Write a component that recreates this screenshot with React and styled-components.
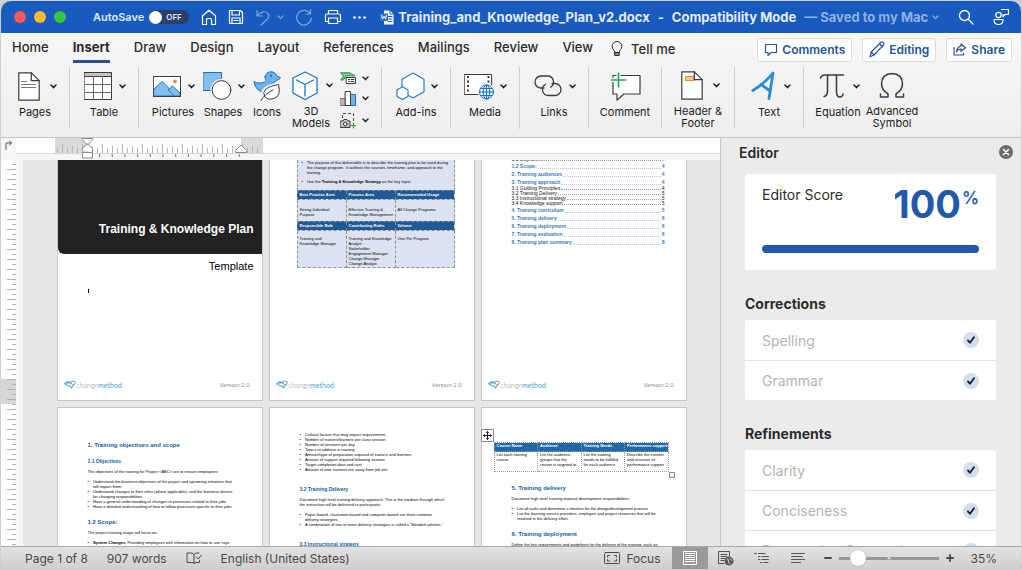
import { Fragment } from 'react'
import styled, { createGlobalStyle, css } from 'styled-components'

const tabs = [
  'Home',
  'Insert',
  'Draw',
  'Design',
  'Layout',
  'References',
  'Mailings',
  'Review',
  'View'
]

const toc = [
  { title: '1.1 Objectives', page: 4, sub: true },
  { title: '1.2 Scope:', page: 4 },
  { title: '2. Training audiences', page: 4 },
  { title: '3. Training approach', page: 4 },
  { title: '3.1 Guiding Principles', page: 4, sub: true },
  { title: '3.2 Training Delivery', page: 5, sub: true },
  { title: '3.3 Instructional strategy', page: 5, sub: true },
  { title: '3.4 Knowledge support', page: 5, sub: true },
  { title: '4. Training curriculum', page: 5 },
  { title: '5. Training delivery', page: 6 },
  { title: '6. Training deployment', page: 6 },
  { title: '7. Training evaluation', page: 6 },
  { title: '8. Training plan summary', page: 8 }
]

const checks = [
  { title: 'Corrections', items: ['Spelling', 'Grammar'] },
  {
    title: 'Refinements',
    items: ['Clarity', 'Conciseness', 'Punctuation Conventions']
  }
]

const range = (n) => Array.from({ length: n }, (_, i) => i)

/* ---------- icons ---------- */

const Svg = ({ w = 18, h = w, box, children, ...rest }) => (
  <svg
    width={w}
    height={h}
    viewBox={box || `0 0 ${w} ${h}`}
    fill="none"
    stroke="currentColor"
    strokeLinecap="round"
    strokeLinejoin="round"
    aria-hidden="true"
    {...rest}>
    {children}
  </svg>
)

const Chevron = ({ w = 7, stroke = 1.5 }) => (
  <Svg w={w} h={5} box="0 0 7 5" strokeWidth={stroke}>
    <path d="M1 1l2.500 2.600L6 1" />
  </Svg>
)

const HomeIcon = () => (
  <Svg w={16} h={17} strokeWidth="1.2">
    <path d="M1.5 6.8L8 1.2l6.500 5.600V15.500h-4V10.500q0-1-1-1h-3q-1 0-1 1v5h-4z" />
  </Svg>
)
const SaveIcon = () => (
  <Svg w={16} strokeWidth="1.2">
    <path d="M1.500 1.500h11l2 2v11h-13zM4 1.500v4.500h7.500V1.500M4 14.500V9h8v5.500M6 11.500h4" />
  </Svg>
)
const UndoIcon = () => (
  <Svg w={16} h={17} strokeWidth="1.200">
    <path d="M2 1.500v5.500h5.500M2 7c3-4 7.500-5.500 10.500-3 2.500 2.300 1.500 4.500-.5 6.500L6 16" />
  </Svg>
)
const RedoIcon = () => (
  <Svg w={18} strokeWidth="1.2">
    <path d="M15.500 1.500v4.500H11M15.300 6A7.300 7.300 0 1 0 16.300 10" />
  </Svg>
)
const PrintIcon = () => (
  <Svg w={18} h={16} strokeWidth="1.2">
    <path d="M4.500 5V1.500h9V5M4.500 12.500h-3v-6q0-1.500 1.500-1.500h12q1.500 0 1.500 1.500v6h-3M4.500 9h9v5.500h-9z" />
  </Svg>
)
const DotsIcon = () => (
  <Svg w={13} h={3} fill="currentColor" stroke="none">
    <circle cx="1.500" cy="1.500" r="1.300" />
    <circle cx="6.500" cy="1.500" r="1.300" />
    <circle cx="11.500" cy="1.500" r="1.300" />
  </Svg>
)
const DocIcon = () => (
  <Svg w={14} h={15} stroke="none">
    <path d="M4 .5h6l3.500 3.500v10.500H4z" fill="#fff" />
    <path d="M10 .5V4h3.500" stroke="#185abd" />
    <path d="M8.500 6.500h3.500M8.500 9h3.500M8.500 11.500h3.500" stroke="#185abd" />
    <rect x="0" y="3.500" width="8" height="7.500" fill="#2f6fd0" />
    <path d="M1.500 5.500l1 3.500L4 6l1.500 3 1-3.500" stroke="#fff" />
  </Svg>
)
const SearchIcon = () => (
  <Svg w={16} strokeWidth="1.300">
    <circle cx="6.500" cy="6.500" r="5" />
    <path d="M10.200 10.200l4.800 4.800" />
  </Svg>
)
const PeopleIcon = () => (
  <Svg w={18} strokeWidth="1.200">
    <circle cx="6.500" cy="7" r="2.700" />
    <path d="M2 11.500h9v1q-.3 4-4.500 4T2 12.500zM9.500 1.500h7v5h-3.500l-2 2v-2" />
  </Svg>
)
const BulbIcon = () => (
  <Svg w={12} h={16} strokeWidth="1">
    <path d="M3.800 11.200C3.800 9 1.200 8.500 1.200 5.300a4.800 4.800 0 0 1 9.600 0c0 3.200-2.600 3.700-2.600 5.900zM3.800 11.200v3.300h4.400v-3.300M4 13h4" />
  </Svg>
)
const CommentsIcon = () => (
  <Svg w={14} strokeWidth="1.200">
    <path d="M1.500 1.500h11v8H7l-3 3v-3H1.500z" />
  </Svg>
)
const PencilIcon = () => (
  <Svg w={16} h={17} strokeWidth="1.200">
    <path d="M1 15.800l1.200-4.800L12 1.300q1.200-.8 2.300.3t.3 2.300L5 14zM2.200 11L5 14M10.500 2.800l3 2.900" />
  </Svg>
)
const ShareIcon = () => (
  <Svg w={14} h={13} strokeWidth="1.200">
    <path d="M1 4.500v7.500h9.500v-2M8 1l4.500 3.700L8 8.300V6.200Q5 6 3.500 8.800 4 4 8 3.200z" />
  </Svg>
)

const PagesIcon = () => (
  <Svg w={22} h={29} stroke="#3b3b3b" strokeWidth="1.200">
    <path d="M.8.800h12.500l7.900 7.900v19.500H.8z" fill="#fff" />
    <path d="M13.300.8v7.900h7.900" />
    <path d="M3.500 9.500h5M3.500 12.500h14M3.500 15.500h14" stroke="#777" />
  </Svg>
)
const TableIcon = () => (
  <Svg w={28} h={28} stroke="#3b3b3b">
    <path d="M.5.5h27v27H.5z" fill="#fff" />
    <path d="M.5.5h27v4H.5z" fill="#c4c4c4" />
    <path d="M9.500 4.500v23M18.500 4.500v23M.5 12.500h27M.5 20.500h27" stroke="#666" />
  </Svg>
)
const PictureIcon = () => (
  <Svg w={28} h={22} stroke="#3b3b3b">
    <path d="M.5 1.500h27v20H.5z" fill="#fff" />
    <path d="M1 14l8-7.500L24 21H1z" fill="#83beec" stroke="#1e72bf" />
    <path d="M15.500 14.500l4-3.500 7.500 7v3h-5z" fill="#83beec" stroke="#1e72bf" />
    <circle cx="22" cy="6.500" r="1.900" fill="#f08a3c" stroke="none" />
    <path d="M.5 1.500h27v20H.5z" />
  </Svg>
)
const ShapesIcon = () => (
  <Svg w={29} h={28}>
    <path d="M.5.5h18v18H.5z" fill="#83beec" stroke="#1e72bf" />
    <circle cx="18.500" cy="18" r="11" fill="#f2f2f2" stroke="none" />
    <circle cx="18.500" cy="18" r="9.400" fill="#fff" stroke="#3b3b3b" />
  </Svg>
)
const DuckIcon = () => (
  <Svg w={28} h={30}>
    <path
      d="M12 6Q13 .8 18 .8q4.500 0 5.500 4.200l4 1.500q-1 2.700-4.500 3-1 2.500-4 3 3 8-5 9Q3 22 .8 10.500q3 2 6.500 1.500 5-.5 6-2.500Q12 8 12 6z"
      fill="#6cb2ea"
      stroke="#1e72bf"
    />
    <circle cx="18" cy="4.800" r="1" fill="#1e5a96" stroke="none" />
    <path
      d="M9.500 25Q7 15 26 12.500q3 12-5 15-6 2-9.500-2z"
      fill="#f2f2f2"
      stroke="#f2f2f2"
      strokeWidth="2"
    />
    <path
      d="M11.500 25.500Q7 16.500 25.500 13.500q3 11.500-4.500 14-6 2-9.500-2zM8 29.500q4-7 12-10.500"
      fill="#fff"
      stroke="#3b3b3b"
    />
  </Svg>
)
const CubeIcon = () => (
  <Svg w={26} h={29} stroke="#1e72bf" strokeWidth="1.300">
    <path d="M13 1l12 6v15l-12 6.500L1 22V7z" fill="#fff" />
    <path d="M4.500 9L13 13.500V25M13 13.500L21.500 9" />
  </Svg>
)
const SmartArtIcon = () => (
  <Svg w={16} h={12}>
    <path d="M.8.800h9l5 3H6L3.500 8H.8l2.500-3.500z" fill="#7fce96" stroke="#1f8f48" />
    <path d="M6.500 5.500h9v6h-9z" fill="#fff" stroke="#3b3b3b" />
    <path d="M8.500 7.500h1M11 7.500h3M8.500 9.500h1M11 9.500h3" stroke="#3b3b3b" />
  </Svg>
)
const ChartIcon = () => (
  <Svg w={16} h={17}>
    <path d="M.5 8.500h5v7h-5z" fill="#b9b9b9" stroke="#777" />
    <path d="M10.500 4.500h5v11h-5z" fill="#6eb2ec" stroke="#1e72bf" />
    <path d="M5.500 1.500h5v14h-5z" fill="#fff" stroke="#3b3b3b" />
  </Svg>
)
const ScreenshotIcon = () => (
  <Svg w={16} h={17}>
    <path d="M2.500 6V1.500h11V9" stroke="#444" strokeDasharray="3 2" strokeLinecap="butt" />
    <path d="M.5 9h2.500l1-1.500h3L8 9h2v6.500H.5z" fill="#c4c4c4" stroke="#3b3b3b" />
    <circle cx="5.300" cy="12" r="1.800" fill="#fff" stroke="#3b3b3b" />
    <path d="M13.500 11v5M11 13.500h5" stroke="#27a046" strokeWidth="1.200" />
  </Svg>
)
const AddinsIcon = () => (
  <Svg w={29} h={29} stroke="#2b7cd3" strokeWidth="1.200">
    <path d="M17 1l11 6.300v12.500L17 26 6 19.800V7.300z" fill="#fff" />
    <path d="M6.500 14.800l5.500 3.200v6.400l-5.500 3.200L1 24.400V18z" fill="#fff" />
  </Svg>
)
const MediaIcon = () => (
  <Svg w={31} h={28}>
    <path d="M.6 2.500h27v20H.6z" fill="#fff" stroke="#3b3b3b" />
    <path
      d="M4 4v18M24.500 4v12"
      stroke="#3b3b3b"
      strokeWidth="2"
      strokeDasharray="2 2.500"
      strokeLinecap="butt"
    />
    <circle cx="22.500" cy="20" r="8.500" fill="#f5f5f5" stroke="none" />
    <g stroke="#1e72bf">
      <circle cx="22.500" cy="20" r="7" fill="#e2f1fc" />
      <ellipse cx="22.500" cy="20" rx="3.200" ry="7" />
      <path d="M15.500 20h14M16.500 16.500h12M16.500 23.500h12M22.500 13v14" />
    </g>
  </Svg>
)
const LinksIcon = () => (
  <Svg w={28} h={22} stroke="#3b3b3b" strokeWidth="1.300">
    <path d="M10 13H7A6 6 0 0 1 7 1h6.500a6 6 0 0 1 3 11.200" />
    <path d="M18 8.500h3a6 6 0 0 1 0 12h-6.500a6 6 0 0 1-3-11.200" />
  </Svg>
)
const CommentIcon = () => (
  <Svg w={31} h={29} strokeWidth="1.200">
    <path
      d="M3 3.500h27v18.500H14l-7 6v-6H3z"
      fill="#fff"
      stroke="#3b3b3b"
    />
    <path d="M8.500 1v15M1 8h15" stroke="#f5f5f5" strokeWidth="4" />
    <path d="M8.500 1v14M1.500 8h14" stroke="#27a862" strokeWidth="1.600" />
  </Svg>
)
const HeaderIcon = () => (
  <Svg w={22} h={29} stroke="#3b3b3b" strokeWidth="1.200">
    <path d="M.8.800h12.500l7.900 7.900v19.500H.8z" fill="#fff" />
    <path d="M4.500 5.500H13v4H4.500z" fill="#fbc98e" stroke="#e8912d" />
    <path d="M13.300.8v7.900h7.900" />
  </Svg>
)
const TextIcon = () => (
  <Svg w={24} h={30} stroke="#2a8dd4" strokeWidth="2.800">
    <path d="M1.800 19.500Q14 12 22 2L18 27.500M10 13.500l8.500 6" />
  </Svg>
)
const PiIcon = () => (
  <Svg w={26} h={26} stroke="#3b3b3b" strokeWidth="1.500">
    <path d="M1.500 5Q2.500 2 6 2h18.500M8.500 2v16q0 5-3.500 5.500M17.500 2v17q0 5 3.500 5 2.500 0 3-3" />
  </Svg>
)
const OmegaIcon = () => (
  <Svg w={26} h={27} stroke="#3b3b3b" strokeWidth="1.500">
    <path d="M1.500 22v3h7.500v-3Q2.500 18 2.500 11.500 3 2 13 1.500q10 .5 10.500 10 0 6.500-6.500 10.500v3h7.500v-3" />
  </Svg>
)

const LogoMark = () => (
  <Svg w={12} h={9} strokeWidth="1.200">
    <path d="M.8 3.500L3.500 2h2l1 1.200" stroke="#3fa4d8" fill="#3fa4d8" />
    <path d="M1 4l3 1.800h2l1.500 2.200L9.500 5" stroke="#5ab3df" />
    <path d="M6.500 2.500l2-1.500 2.700 1-.7 2.500-2 .5z" stroke="#8fa9b8" />
  </Svg>
)
const CheckMark = () => (
  <Svg w={8} h={8} stroke="#16213a" strokeWidth="1.900">
    <path d="M1 4.500l2 2.200L7 1.200" />
  </Svg>
)
const BookIcon = () => (
  <Svg w={16} h={13}>
    <path d="M8 11.500V2.500Q7 1 5 1H1v9.500h5q1.500 0 2 1 .5-1 2-1h3.500V8.500M8 2.500Q9 1 11 1h2M10.500 5l1.800 2L15.500 3" />
  </Svg>
)
const FocusIcon = () => (
  <Svg w={16} h={12}>
    <rect x=".5" y=".5" width="15" height="11" rx="1" />
    <path d="M3.500 5V3.500H5.500M10.500 3.500h2V5M12.500 7.500v1.500h-2M5.500 9H3.500V7.500" />
  </Svg>
)
const PrintViewIcon = () => (
  <Svg w={14} h={14} strokeLinecap="butt">
    <path d="M.5.5h13v13H.5z" />
    <path d="M2 2.500h10M2 4.500h10M2 6.500h10M2 8.500h10M2 10.500h10" />
  </Svg>
)
const WebViewIcon = () => (
  <Svg w={16} h={15}>
    <path d="M6 12.500H.5v-12h11V5M3 3.500h6M3 5.500h6M3 7.500h4M3 9.500h3" />
    <circle cx="11" cy="10" r="4" fill="#555" />
    <path d="M9 8q2 0 1.500 2T12 12.500M12 7.500l2 2" stroke="#ddd" />
  </Svg>
)
const OutlineIcon = () => (
  <Svg w={15} h={12}>
    <path d="M.5 1.500h2M4.500 1.500H11M4.500 4.500H6M8 4.500h6.500M4.500 7.500H6M8 7.500h6.500M6.500 10.500H8M10 10.500h4" />
  </Svg>
)
const DraftIcon = () => (
  <Svg w={14} h={12}>
    <path d="M.5 1.500h13M.5 4.500h11M.5 7.500h13M.5 10.500h9" />
  </Svg>
)
const MinusIcon = () => (
  <Svg w={8} strokeWidth="2">
    <path d="M1 4h6" />
  </Svg>
)
const PlusIcon = () => (
  <Svg w={8} strokeWidth="1.800">
    <path d="M1 4h6M4 1v6" />
  </Svg>
)
const CloseIcon = () => (
  <Svg w={14} stroke="#fff" strokeWidth="1.600">
    <circle cx="7" cy="7" r="7" fill="#6c6c6c" stroke="none" />
    <path d="M4.500 4.500l5 5M9.500 4.500l-5 5" />
  </Svg>
)
const TabStopIcon = () => (
  <Svg w={8} h={10} stroke="#555">
    <path d="M1 9.500V3h5.500M4.500 1l2 2-2 2" />
  </Svg>
)
const MoveIcon = () => (
  <Svg w={9} h={9} stroke="#222">
    <path d="M4.500.5v8M.5 4.500h8M3.500 1.500l1-1 1 1M3.500 7.500l1 1 1-1M1.500 3.500l-1 1 1 1M7.500 3.500l1 1-1 1" />
  </Svg>
)

/* ---------- rulers ---------- */

const HorizontalRuler = () => (
  <Svg w={250} h={22} strokeLinecap="butt">
    <path d="M39 0h33v15H39zM225 0h22v15h-22z" fill="#dadada" stroke="none" />
    {range(41).map((i) => {
      const x = 41.500 + i * 5
      return (
        <path
          key={i}
          d={`M${x} ${i % 4 === 1 ? 6 : i % 2 ? 8 : 10}V15`}
          stroke="#b4b4b4"
        />
      )
    })}
    {range(12).map((i) => (
      <path key={i} d={`M${83.500 + i * 12.700} 16v3`} stroke="#777" />
    ))}
    <path d="M66 .5h11v1L71.500 7 66 1.500zM66.500 12v-1.500L71.500 6l5 4.500V20h-10v-5.500h10" fill="#fff" stroke="#8a8a8a" />
    <path d="M219.500 14.500v-2L225 7l5.500 5.500v2z" fill="#fff" stroke="#8a8a8a" />
  </Svg>
)

const VerticalRuler = () => (
  <Svg w={15} h={386} strokeLinecap="butt">
    <path d="M0 219h15v25H0z" fill="#d6d6d6" stroke="none" />
    {range(77).map((i) => (
      <path
        key={i}
        d={`M${i % 2 ? 6 : 11} ${4.500 + i * 5}H15`}
        stroke="#b0b0b0"
      />
    ))}
  </Svg>
)

/* ---------- pieces ---------- */

const Tool = ({ icon, label, menu, width }) => (
  <ToolButton $width={width}>
    <ToolTop>
      <ToolIcon>{icon}</ToolIcon>
      {menu && <Chevron />}
    </ToolTop>
    <span>{label}</span>
  </ToolButton>
)

const MiniTool = ({ icon, label }) => (
  <MiniButton aria-label={label}>
    {icon}
    <Chevron />
  </MiniButton>
)

const PageFooter = () => (
  <Footer>
    <Brand>
      <LogoMark />
      <span>
        change<b>method</b>
      </span>
    </Brand>
    <span>Version 2.0</span>
  </Footer>
)

const Bullets = ({ items }) => (
  <BulletList>
    {items.map((item, i) => (
      <li key={i}>
        <span>•</span>
        <p>{item}</p>
      </li>
    ))}
  </BulletList>
)

function TitleBar() {
  return (
    <TopBar>
      <Lights>
        <Light $color="#fc5b57" />
        <Light $color="#fdbc2e" />
        <Light $color="#34c83f" />
      </Lights>
      <AutoSave>
        AutoSave
        <Switch>
          <input type="checkbox" />
          <span>OFF</span>
        </Switch>
      </AutoSave>
      <QuickTools>
        <BarButton aria-label="Home">
          <HomeIcon />
        </BarButton>
        <BarButton aria-label="Save">
          <SaveIcon />
        </BarButton>
        <BarButton aria-label="Undo" $faded>
          <UndoIcon />
          <Chevron stroke={1.2} />
        </BarButton>
        <BarButton aria-label="Redo" $faded>
          <RedoIcon />
        </BarButton>
        <BarButton aria-label="Print">
          <PrintIcon />
        </BarButton>
        <BarButton aria-label="More">
          <DotsIcon />
        </BarButton>
      </QuickTools>
      <DocTitle>
        <FileName>
          <DocIcon />
          Training_and_Knowledge_Plan_v2.docx
        </FileName>
        <span>-</span>
        <span>Compatibility Mode</span>
        <Saved>
          — Saved to my Mac <Chevron stroke={1.2} />
        </Saved>
      </DocTitle>
      <BarEnd>
        <BarButton aria-label="Search">
          <SearchIcon />
        </BarButton>
        <BarButton aria-label="Presence">
          <PeopleIcon />
        </BarButton>
      </BarEnd>
    </TopBar>
  )
}

function Ribbon() {
  return (
    <RibbonArea>
      <TabRow>
        <TabList>
          {tabs.map((tab) => (
            <Tab key={tab} $active={tab === 'Insert'}>
              {tab}
            </Tab>
          ))}
        </TabList>
        <TellMe>
          <BulbIcon />
          Tell me
        </TellMe>
        <Actions>
          <ActionButton>
            <CommentsIcon />
            Comments
          </ActionButton>
          <ActionButton>
            <PencilIcon />
            Editing
          </ActionButton>
          <ActionButton>
            <ShareIcon />
            Share
          </ActionButton>
        </Actions>
      </TabRow>
      <ToolRow>
        <Group>
          <Tool icon={<PagesIcon />} label="Pages" menu />
        </Group>
        <Group>
          <Tool icon={<TableIcon />} label="Table" menu />
        </Group>
        <Group>
          <Tool icon={<PictureIcon />} label="Pictures" menu />
          <Tool icon={<ShapesIcon />} label="Shapes" menu />
          <Tool icon={<DuckIcon />} label="Icons" width={38} />
          <Tool icon={<CubeIcon />} label="3D Models" menu />
          <MiniStack>
            <MiniTool icon={<SmartArtIcon />} label="SmartArt" />
            <MiniTool icon={<ChartIcon />} label="Chart" />
            <MiniTool icon={<ScreenshotIcon />} label="Screenshot" />
          </MiniStack>
        </Group>
        <Group>
          <Tool icon={<AddinsIcon />} label="Add-ins" menu />
        </Group>
        <Group>
          <Tool icon={<MediaIcon />} label="Media" menu />
        </Group>
        <Group>
          <Tool icon={<LinksIcon />} label="Links" menu />
        </Group>
        <Group>
          <Tool icon={<CommentIcon />} label="Comment" width={54} />
        </Group>
        <Group>
          <Tool icon={<HeaderIcon />} label="Header & Footer" menu width={54} />
        </Group>
        <Group>
          <Tool icon={<TextIcon />} label="Text" menu />
        </Group>
        <Group>
          <Tool icon={<PiIcon />} label="Equation" menu />
          <Tool icon={<OmegaIcon />} label="Advanced Symbol" width={58} />
        </Group>
      </ToolRow>
    </RibbonArea>
  )
}

function Pages() {
  return (
    <PageGrid>
      <Page $cut>
        <Cover>Training &amp; Knowledge Plan</Cover>
        <Subtitle>Template</Subtitle>
        <Caret />
        <PageFooter />
      </Page>

      <Page $cut>
        <SummaryTable>
          <colgroup>
            <col width="49" />
            <col width="49" />
            <col width="59" />
          </colgroup>
          <tbody>
            <tr>
              <td colSpan={3}>
                <Bullets
                  items={[
                    'The purpose of this deliverable is to describe the training plan to be used during\nthe change program.  It outlines the courses, timeframe, and approach to the\ntraining.'
                  ]}
                />
                <Bullets
                  items={[
                    <Fragment key="use">
                      Use the <b>Training &amp; Knowledge Strategy</b> as the key
                      input.
                    </Fragment>
                  ]}
                />
              </td>
            </tr>
            <tr>
              <th>Best Practice Area</th>
              <th>Process Area</th>
              <th>Recommended Usage</th>
            </tr>
            <tr>
              <SummaryCell $height={22}>{'Strong Individual\nPurpose'}</SummaryCell>
              <SummaryCell>{'Effective Training &\nKnowledge Management'}</SummaryCell>
              <SummaryCell>All Change Programs</SummaryCell>
            </tr>
            <tr>
              <th>Responsible Role</th>
              <th>Contributing Roles</th>
              <th>Volume</th>
            </tr>
            <tr>
              <SummaryCell $height={37}>{'Training and\nKnowledge Manager'}</SummaryCell>
              <SummaryCell>
                {
                  'Training and Knowledge\nAnalyst\nStakeholder\nEngagement Manager\nChange Manager\nChange Analyst'
                }
              </SummaryCell>
              <SummaryCell>One Per Program</SummaryCell>
            </tr>
          </tbody>
        </SummaryTable>
        <PageFooter />
      </Page>

      <Page $cut>
        <Toc>
          {toc.map((entry) => (
            <TocRow key={entry.title} $sub={entry.sub}>
              <span>{entry.title}</span>
              <Leader />
              <span>{entry.page}</span>
            </TocRow>
          ))}
        </Toc>
        <PageFooter />
      </Page>

      <Page>
        <PageBody $top={34}>
          <h2>1. Training objectives and scope</h2>
          <h3>1.1 Objectives</h3>
          <p>The objectives of the training for Project &lt;ABC&gt; are to ensure employees:</p>
          <Bullets
            items={[
              'Understand the business objectives of the project and upcoming initiatives that\nwill impact them',
              'Understand changes to their roles (where applicable), and the business drivers\nfor changing responsibilities',
              'Have a general understanding of changes to processes related to their jobs',
              'Have a detailed understanding of how to follow processes specific to their jobs'
            ]}
          />
          <h2>1.2 Scope:</h2>
          <p>The project training scope will focus on:</p>
          <Bullets
            items={[
              <Fragment key="system">
                <b>System Changes:</b> Providing employees with information on how to
                use &lt;xyz
              </Fragment>
            ]}
          />
        </PageBody>
      </Page>

      <Page>
        <PageBody $top={19}>
          <Bullets
            items={[
              'Cultural factors that may impact requirements',
              'Number of trainers/learners per class session',
              'Number of sessions per day',
              'Topics to address in training',
              'Amount/type of preparation required of trainers and learners',
              'Amount of support required following session',
              'Target completion date and cost',
              'Amount of time trainees are away from job site'
            ]}
          />
          <h3>3.2 Training Delivery</h3>
          <p>
            {
              'Document high level training delivery approach. This is the medium through which\nthe instruction will be delivered to participants.'
            }
          </p>
          <Bullets
            items={[
              'Paper-based, classroom-based and computer-based are three common\ndelivery strategies.',
              'A combination of two or more delivery strategies is called a “blended solution.”'
            ]}
          />
          <h3>3.3 Instructional strategy</h3>
        </PageBody>
      </Page>

      <Page>
        <MoveHandle>
          <MoveIcon />
        </MoveHandle>
        <CourseTable>
          <thead>
            <tr>
              <th>Course Name</th>
              <th>Audience</th>
              <th>Training Needs</th>
              <th>Performance support</th>
            </tr>
          </thead>
          <tbody>
            <tr>
              <td>{'List each training\ncourse'}</td>
              <td>{'List the audience\ngroups that the\ncourse is targeted to'}</td>
              <td>{'List the training\nneeds to be fulfilled\nfor each audience'}</td>
              <td>{'Describe the content\nand structure of\nperformance support'}</td>
            </tr>
          </tbody>
        </CourseTable>
        <ResizeHandle />
        <PageBody $top={7}>
          <h2>5. Training delivery</h2>
          <p>Document high-level training material development responsibilities.</p>
          <Bullets
            items={[
              'List all tasks and determine a timeline for the design/development process',
              'List the learning service providers, employee and project resources that will be\ninvolved in the delivery effort.'
            ]}
          />
          <h2>6. Training deployment</h2>
          <p>Define the key requirements and guidelines for the delivery of the training, such as:</p>
        </PageBody>
      </Page>
    </PageGrid>
  )
}

function EditorPanel() {
  return (
    <Panel>
      <PanelHeader>
        <h2>Editor</h2>
        <CloseButton aria-label="Close">
          <CloseIcon />
        </CloseButton>
      </PanelHeader>
      <PanelBody>
        <ScoreCard>
          <ScoreRow>
            <span>Editor Score</span>
            <Score>
              100<small>%</small>
            </Score>
          </ScoreRow>
          <ScoreBar />
        </ScoreCard>
        {checks.map((section) => (
          <CheckSection key={section.title}>
            <h3>{section.title}</h3>
            <CheckCard>
              {section.items.map((item) => (
                <CheckRow key={item}>
                  {item}
                  <CheckDot>
                    <CheckMark />
                  </CheckDot>
                </CheckRow>
              ))}
            </CheckCard>
          </CheckSection>
        ))}
      </PanelBody>
    </Panel>
  )
}

function StatusBar() {
  return (
    <Status>
      <StatusInfo>
        <span>Page 1 of 8</span>
        <span>907 words</span>
        <BookIcon />
        <span>English (United States)</span>
      </StatusInfo>
      <FocusButton>
        <FocusIcon />
        Focus
      </FocusButton>
      <ViewButton aria-label="Print layout" $active>
        <PrintViewIcon />
      </ViewButton>
      <ViewButton aria-label="Web layout">
        <WebViewIcon />
      </ViewButton>
      <ViewButton aria-label="Outline">
        <OutlineIcon />
      </ViewButton>
      <ViewButton aria-label="Draft">
        <DraftIcon />
      </ViewButton>
      <Zoom>
        <IconButton aria-label="Zoom out">
          <MinusIcon />
        </IconButton>
        <Slider type="range" min="10" max="190" defaultValue="35" aria-label="Zoom" />
        <IconButton aria-label="Zoom in">
          <PlusIcon />
        </IconButton>
      </Zoom>
      <Percent>35%</Percent>
    </Status>
  )
}

function App() {
  return (
    <>
      <GlobalStyle />
      <Window>
        <TitleBar />
        <Ribbon />
        <Workspace>
          <DocArea>
            <RulerRow>
              <TabStop aria-label="Tab stop">
                <TabStopIcon />
              </TabStop>
              <HorizontalRuler />
            </RulerRow>
            <DocRow>
              <SideRuler>
                <VerticalRuler />
              </SideRuler>
              <Pages />
            </DocRow>
          </DocArea>
          <EditorPanel />
        </Workspace>
        <StatusBar />
      </Window>
    </>
  )
}

/* ---------- styles ---------- */

const GlobalStyle = createGlobalStyle`
  * {
    box-sizing: border-box;
  }
  body {
    margin: 0;
    background: #cfcfcf;
    font-family: Inter, "Liberation Sans", sans-serif;
    color: #2b2b2b;
  }
  h1, h2, h3, p, ul {
    margin: 0;
    padding: 0;
  }
  button {
    margin: 0;
    padding: 0;
    border: 0;
    background: none;
    font: inherit;
    color: inherit;
  }
  svg {
    display: block;
    flex: none;
  }
`

const Window = styled.div`
  display: flex;
  flex-direction: column;
  height: calc(100vh - 2px);
  margin: 1px;
  border-radius: 10px;
  overflow: hidden;
  background: #ebebeb;
`

const TopBar = styled.header`
  display: flex;
  align-items: center;
  flex: none;
  height: 32px;
  padding: 0 11px 0 13px;
  background: #185abd;
  color: #fff;
`

const Lights = styled.div`
  display: flex;
  gap: 8px;
  margin-right: 27px;
`

const Light = styled.span`
  width: 12px;
  height: 12px;
  border-radius: 50%;
  background: ${(props) => props.$color};
`

const AutoSave = styled.label`
  display: flex;
  align-items: center;
  gap: 5px;
  margin-right: 12px;
  font-size: 11px;
  font-weight: 600;
  color: #dfe9f8;
`

const Switch = styled.span`
  display: flex;
  align-items: center;
  width: 40px;
  height: 14px;
  border-radius: 7px;
  background: #28406b;
  font-size: 8px;

  input {
    appearance: none;
    width: 13px;
    height: 13px;
    margin: 0 4px 0 0;
    border-radius: 50%;
    background: #fff;
  }
`

const QuickTools = styled.div`
  display: flex;
  align-items: center;
  gap: 11px;
  margin-right: 14px;
`

const BarButton = styled.button`
  display: flex;
  align-items: center;
  gap: 6px;
  opacity: ${(props) => (props.$faded ? 0.45 : 1)};
`

const DocTitle = styled.div`
  display: flex;
  align-items: center;
  gap: 8px;
  flex: 1;
  font-size: 13px;
  font-weight: 700;
  color: #e3ecfa;
  white-space: nowrap;
`

const FileName = styled.h1`
  display: flex;
  align-items: center;
  gap: 4px;
  font-size: 13px;
`

const Saved = styled.span`
  display: flex;
  align-items: center;
  gap: 4px;
  color: #8fb0e4;
`

const BarEnd = styled.div`
  display: flex;
  gap: 18px;
`

const RibbonArea = styled.div`
  flex: none;
  border-bottom: 1px solid #c3c3c3;
  background: linear-gradient(#f7f7f7, #eee);
`

const TabRow = styled.div`
  display: flex;
  align-items: center;
  height: 31px;
  padding: 0 9px 0 11px;
`

const TabList = styled.nav`
  display: flex;
  gap: 24px;
`

const Tab = styled.button`
  height: 28px;
  border-bottom: 3px solid transparent;
  font-size: 13px;
  font-weight: 500;

  ${(props) =>
    props.$active &&
    css`
      font-weight: 700;
      border-image: linear-gradient(#2b4f92, #2b4f92) 1;
    `}
`

const TellMe = styled.button`
  display: flex;
  align-items: center;
  gap: 8px;
  margin-left: 18px;
  font-size: 13px;
  font-weight: 500;
`

const Actions = styled.div`
  display: flex;
  gap: 10px;
  margin: 2px 0 0 auto;
`

const ActionButton = styled.button`
  display: flex;
  align-items: center;
  gap: 4px;
  height: 24px;
  padding: 0 6px;
  border: 1px solid #dcdcdc;
  border-radius: 3px;
  background: #fff;
  font-size: 12px;
  font-weight: 600;
  color: #24539c;
`

const ToolRow = styled.div`
  display: flex;
  height: 73px;
  padding: 3px 0 8px;
`

const Group = styled.div`
  display: flex;
  padding: 0 9px;

  & + & {
    border-left: 1px solid #d0d0d0;
  }
`

const ToolButton = styled.button`
  display: flex;
  flex-direction: column;
  align-items: center;
  width: ${(props) => props.$width || 50}px;
  padding-top: 3px;
  font-size: 11px;
  line-height: 12px;
  color: #1c1c1c;
`

const ToolTop = styled.span`
  display: flex;
  align-items: center;
  gap: 5px;
  height: 32px;
  margin-bottom: 4px;
`

const ToolIcon = styled.span`
  display: flex;
  justify-content: center;
  width: 31px;
`

const MiniStack = styled.div`
  display: flex;
  flex-direction: column;
  gap: 5px;
  padding: 4px 3px 0 4px;
`

const MiniButton = styled.button`
  display: flex;
  align-items: center;
  gap: 6px;
  height: 17px;
`

const Workspace = styled.div`
  display: flex;
  flex: 1;
  min-height: 0;
`

const DocArea = styled.main`
  display: flex;
  flex-direction: column;
  flex: 1;
  min-width: 0;
`

const RulerRow = styled.div`
  display: flex;
  flex: none;
  height: 22px;
  background: linear-gradient(#fff 15px, #d9d9d9 15px 16px, #f6f6f6 16px);
`

const TabStop = styled.button`
  display: flex;
  justify-content: center;
  width: 15px;
  height: 16px;
  padding-top: 2px;
  background: #f6f6f6;
`

const DocRow = styled.div`
  display: flex;
  flex: 1;
  min-height: 0;
  overflow: hidden;
`

const SideRuler = styled.div`
  width: 22px;
  border-right: 7px solid #f4f4f4;
  background: #fff;
`

const PageGrid = styled.div`
  display: grid;
  grid-template-columns: repeat(3, 206px);
  grid-template-rows: 241px 267px;
  gap: 6px;
  justify-content: center;
  flex: 1;
  background: #e6e6e6;
  font-family: "Liberation Sans", Arial, sans-serif;
  font-size: 4px;
  line-height: 5px;
  color: #000;
`

const Page = styled.article`
  position: relative;
  display: flex;
  flex-direction: column;
  border: 1px solid #c6c6c6;
  border-top-width: ${(props) => (props.$cut ? 0 : 1)}px;
  background: #fff;
  overflow: hidden;
  white-space: pre;

  &:last-child {
    overflow: visible;
  }
`

const Cover = styled.div`
  height: 94px;
  padding: 62px 8px 0 0;
  border-bottom-left-radius: 6px;
  background: #222;
  color: #fff;
  font-size: 12px;
  font-weight: 700;
  line-height: 15px;
  text-align: right;
`

const Subtitle = styled.div`
  padding: 6px 8px 0 0;
  font-size: 11px;
  line-height: 13px;
  text-align: right;
`

const Caret = styled.span`
  width: 1px;
  height: 4px;
  margin: 16px 0 0 30px;
  background: #000;
`

const Footer = styled.footer`
  display: flex;
  align-items: center;
  justify-content: space-between;
  margin-top: auto;
  padding: 0 12px 11px 6px;
  font-size: 6px;
  line-height: 8px;
  color: #8c8c8c;
`

const Brand = styled.span`
  display: flex;
  align-items: center;
  gap: 1px;
  font-family: Lato, sans-serif;
  font-size: 7px;
  font-weight: 300;

  b {
    font-weight: 400;
    color: #3fa4d8;
  }
`

const BulletList = styled.ul`
  list-style: none;

  li {
    display: flex;
    gap: 4px;
  }
`

const PageBody = styled.div`
  padding: ${(props) => props.$top}px 0 0 30px;

  h2,
  h3 {
    margin-top: 14px;
    font-size: 5px;
    line-height: 6px;
    color: #0f5fa3;
  }
  h2 {
    font-size: 6px;
  }
  h2:first-child {
    margin-top: 0;
  }
  h2 + h3,
  ul + h2 {
    margin-top: 10px;
  }
  > p,
  ${BulletList} {
    margin-top: 5px;
  }
`

const SummaryTable = styled.table`
  width: 158px;
  margin-left: 27px;
  table-layout: fixed;
  border-collapse: collapse;
  background: #dde2f0;

  th,
  td {
    padding: 0 2px;
    border: 1px dashed #8b8f99;
    border-top: 0;
    text-align: left;
    vertical-align: top;
  }
  td[colspan] {
    height: 30px;
    padding-left: 4px;
  }
  th {
    height: 9px;
    background: #1f5a96;
    color: #fff;
    vertical-align: middle;
    line-height: 5px;
  }
  ${BulletList} + ${BulletList} {
    margin-top: 4px;
  }
`

const SummaryCell = styled.td`
  && {
    height: ${(props) => props.$height}px;
    padding-top: 7px;
    overflow: hidden;
  }
  tr:last-child > && {
    padding-top: 5px;
  }
`

const Toc = styled.div`
  width: 153px;
  margin: -3px 0 0 30px;
`

const TocRow = styled.div`
  display: flex;
  align-items: flex-end;
  gap: 1px;
  font-size: 5px;
  font-weight: ${(props) => (props.$sub ? 400 : 700)};
  line-height: ${(props) => (props.$sub ? 5 : 8)}px;
  color: ${(props) => (props.$sub ? '#111' : '#3f77c0')};
`

const Leader = styled.span`
  flex: 1;
  margin-bottom: 1px;
  border-bottom: 1px dotted currentColor;
  opacity: 0.4;
`

const MoveHandle = styled.span`
  position: absolute;
  top: 21px;
  left: -1px;
  display: flex;
  align-items: center;
  justify-content: center;
  width: 13px;
  height: 13px;
  border: 1px solid #8a8a8a;
  background: #fff;
`

const ResizeHandle = styled.span`
  width: 6px;
  height: 6px;
  margin-left: 187px;
  border: 1px solid #8a8a8a;
  background: #fff;
`

const CourseTable = styled.table`
  width: 175px;
  margin: 34px 0 0 12px;
  table-layout: fixed;
  border-collapse: collapse;

  th,
  td {
    padding: 0 2px;
    border: 1px dotted #9a9a9a;
    text-align: left;
    vertical-align: top;
  }
  th {
    height: 9px;
    padding-bottom: 3px;
    background: #1f69a8;
    color: #fff;
  }
  td {
    height: 20px;
  }
`

const Panel = styled.aside`
  display: flex;
  flex-direction: column;
  flex: none;
  width: 301px;
  border-left: 1px solid #c9c9c9;
  background: #ebebeb;
  overflow: hidden;
`

const PanelHeader = styled.div`
  display: flex;
  align-items: center;
  justify-content: space-between;
  flex: none;
  height: 28px;
  padding: 0 8px 0 18px;

  h2 {
    font-size: 14px;
    font-weight: 600;
  }
`

const CloseButton = styled.button`
  display: flex;
`

const PanelBody = styled.div`
  padding: 8px 25px 0 24px;
  font-size: 14px;
`

const ScoreCard = styled.section`
  height: 96px;
  padding: 12px 17px;
  border-radius: 3px;
  background: #fff;
`

const ScoreRow = styled.div`
  display: flex;
  justify-content: space-between;
  height: 59px;
  line-height: 18px;
`

const Score = styled.strong`
  display: flex;
  gap: 1px;
  font-size: 38px;
  line-height: 36px;
  color: #2259ad;

  small {
    font-size: 17px;
    line-height: 24px;
    font-weight: 600;
  }
`

const ScoreBar = styled.div`
  height: 8px;
  border-radius: 4px;
  background: #2259ad;
`

const CheckSection = styled.section`
  padding-top: 24px;

  h3 {
    margin-bottom: 6px;
    font-size: 14px;
    font-weight: 700;
    line-height: 20px;
  }
`

const CheckCard = styled.ul`
  border-radius: 3px;
  background: #fff;
  list-style: none;
`

const CheckRow = styled.li`
  display: flex;
  align-items: center;
  justify-content: space-between;
  height: 40px;
  padding: 0 17px;
  color: #b3b3b3;

  & + & {
    border-top: 1px solid #e2e2e2;
  }
`

const CheckDot = styled.span`
  display: flex;
  align-items: center;
  justify-content: center;
  width: 16px;
  height: 16px;
  border-radius: 50%;
  background: #d3deed;
`

const Status = styled.footer`
  display: flex;
  align-items: center;
  flex: none;
  height: 23px;
  padding-right: 24px;
  border-top: 1px solid #a9a9a9;
  background: linear-gradient(#e2e2e2, #cfcfcf);
  font-size: 12px;
  color: #4a4a4a;
`

const StatusInfo = styled.div`
  display: flex;
  align-items: center;
  gap: 19px;
  margin-right: auto;
  padding-left: 24px;
`

const FocusButton = styled.button`
  display: flex;
  align-items: center;
  gap: 6px;
  margin-right: 11px;
`

const ViewButton = styled.button`
  display: flex;
  align-items: center;
  justify-content: center;
  width: 36px;
  height: 100%;
  background: ${(props) => (props.$active ? '#9a9a9a' : 'none')};
  color: ${(props) => (props.$active ? '#fff' : '#555')};
`

const Zoom = styled.div`
  display: flex;
  align-items: center;
  gap: 7px;
  margin: 0 17px 0 8px;
`

const IconButton = styled.button`
  display: flex;
`

const Slider = styled.input`
  appearance: none;
  width: 100px;
  height: 16px;
  margin: 0;
  background: radial-gradient(circle at center, #d8d8d8 1px, transparent 2px),
    linear-gradient(#979797, #979797) center / 100% 3px no-repeat;

  &::-webkit-slider-thumb {
    appearance: none;
    width: 16px;
    height: 16px;
    border-radius: 50%;
    background: #fff;
    box-shadow: 0 0 1px #888;
  }
`

const Percent = styled.span`
  min-width: 26px;
`

export default App
